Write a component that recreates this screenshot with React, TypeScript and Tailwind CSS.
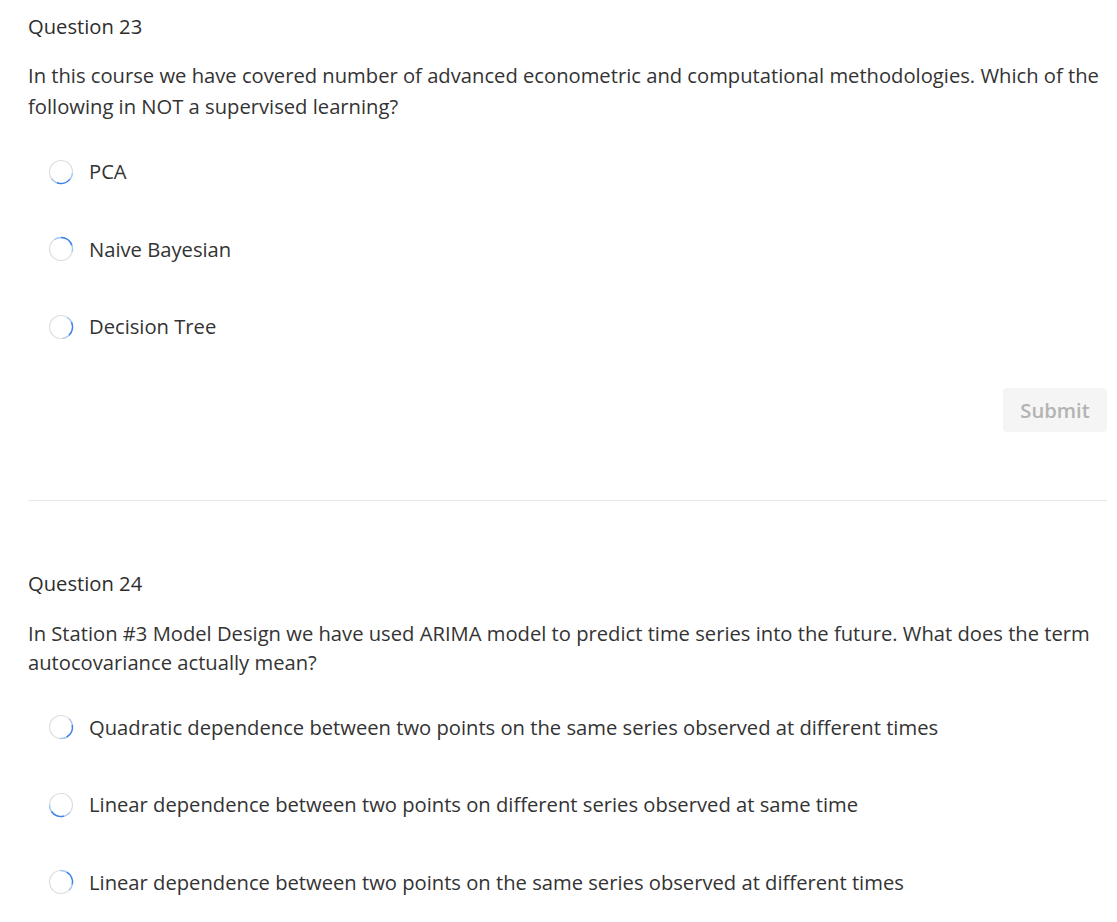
import React from "react";

function Radio({ angle }: { angle: number }) {
  const r = 11.5;
  const c = 2 * Math.PI * r;
  const arc = (deg: number) => `${(c * deg) / 360} ${c}`;
  return (
    <svg width="26" height="26" viewBox="0 0 26 26" className="shrink-0">
      <circle cx="13" cy="13" r={r} fill="white" stroke="#dcdcdc" strokeWidth="1.2" />
      <circle
        cx="13"
        cy="13"
        r={r}
        fill="none"
        stroke="#a9c9f5"
        strokeWidth="1.4"
        strokeDasharray={arc(140)}
        transform={`rotate(${angle - 70} 13 13)`}
      />
      <circle
        cx="13"
        cy="13"
        r={r}
        fill="none"
        stroke="#3b82ea"
        strokeWidth="1.4"
        strokeDasharray={arc(70)}
        transform={`rotate(${angle - 35} 13 13)`}
      />
    </svg>
  );
}

function Option({ label, angle }: { label: string; angle: number }) {
  return (
    <div className="flex items-center h-[25px] ml-[20px] gap-[15px]">
      <Radio angle={angle} />
      <span className="text-[20.2px] leading-[25px] text-[#333]">{label}</span>
    </div>
  );
}

export default function App() {
  return (
    <div className="bg-white min-h-[922px] pl-[28px] pr-[10px] pt-[12px] font-['Open_Sans',sans-serif] text-[#2d2d2d]">
      <h2 className="text-[20.2px] leading-[28px] font-normal">Question 23</h2>
      <p className="mt-[20px] text-[20.2px] leading-[31px] text-[#333]">
        In this course we have covered number of advanced econometric and computational methodologies. Which of the
        following in NOT a supervised learning?
      </p>
      <div className="mt-[37px] flex flex-col gap-[52.5px]">
        <Option label="PCA" angle={75} />
        <Option label="Naive Bayesian" angle={-55} />
        <Option label="Decision Tree" angle={10} />
      </div>
      <div className="mt-[49px] flex justify-end">
        <button className="h-[44px] w-[104px] rounded-[4px] bg-[#f5f5f5] text-[20.2px] font-semibold text-[#b3b3b3]">
          Submit
        </button>
      </div>
      <div className="mt-[68px] border-t border-[#e8e8e8]" />
      <h2 className="mt-[68px] text-[20.2px] leading-[28px] font-normal">Question 24</h2>
      <p className="mt-[21.5px] text-[20.2px] leading-[29px] text-[#333]">
        In Station #3 Model Design we have used ARIMA model to predict time series into the future. What does the term
        autocovariance actually mean?
      </p>
      <div className="mt-[38px] flex flex-col gap-[52.5px]">
        <Option label="Quadratic dependence between two points on the same series observed at different times" angle={25} />
        <Option label="Linear dependence between two points on different series observed at same time" angle={110} />
        <Option label="Linear dependence between two points on the same series observed at different times" angle={-25} />
      </div>
    </div>
  );
}
